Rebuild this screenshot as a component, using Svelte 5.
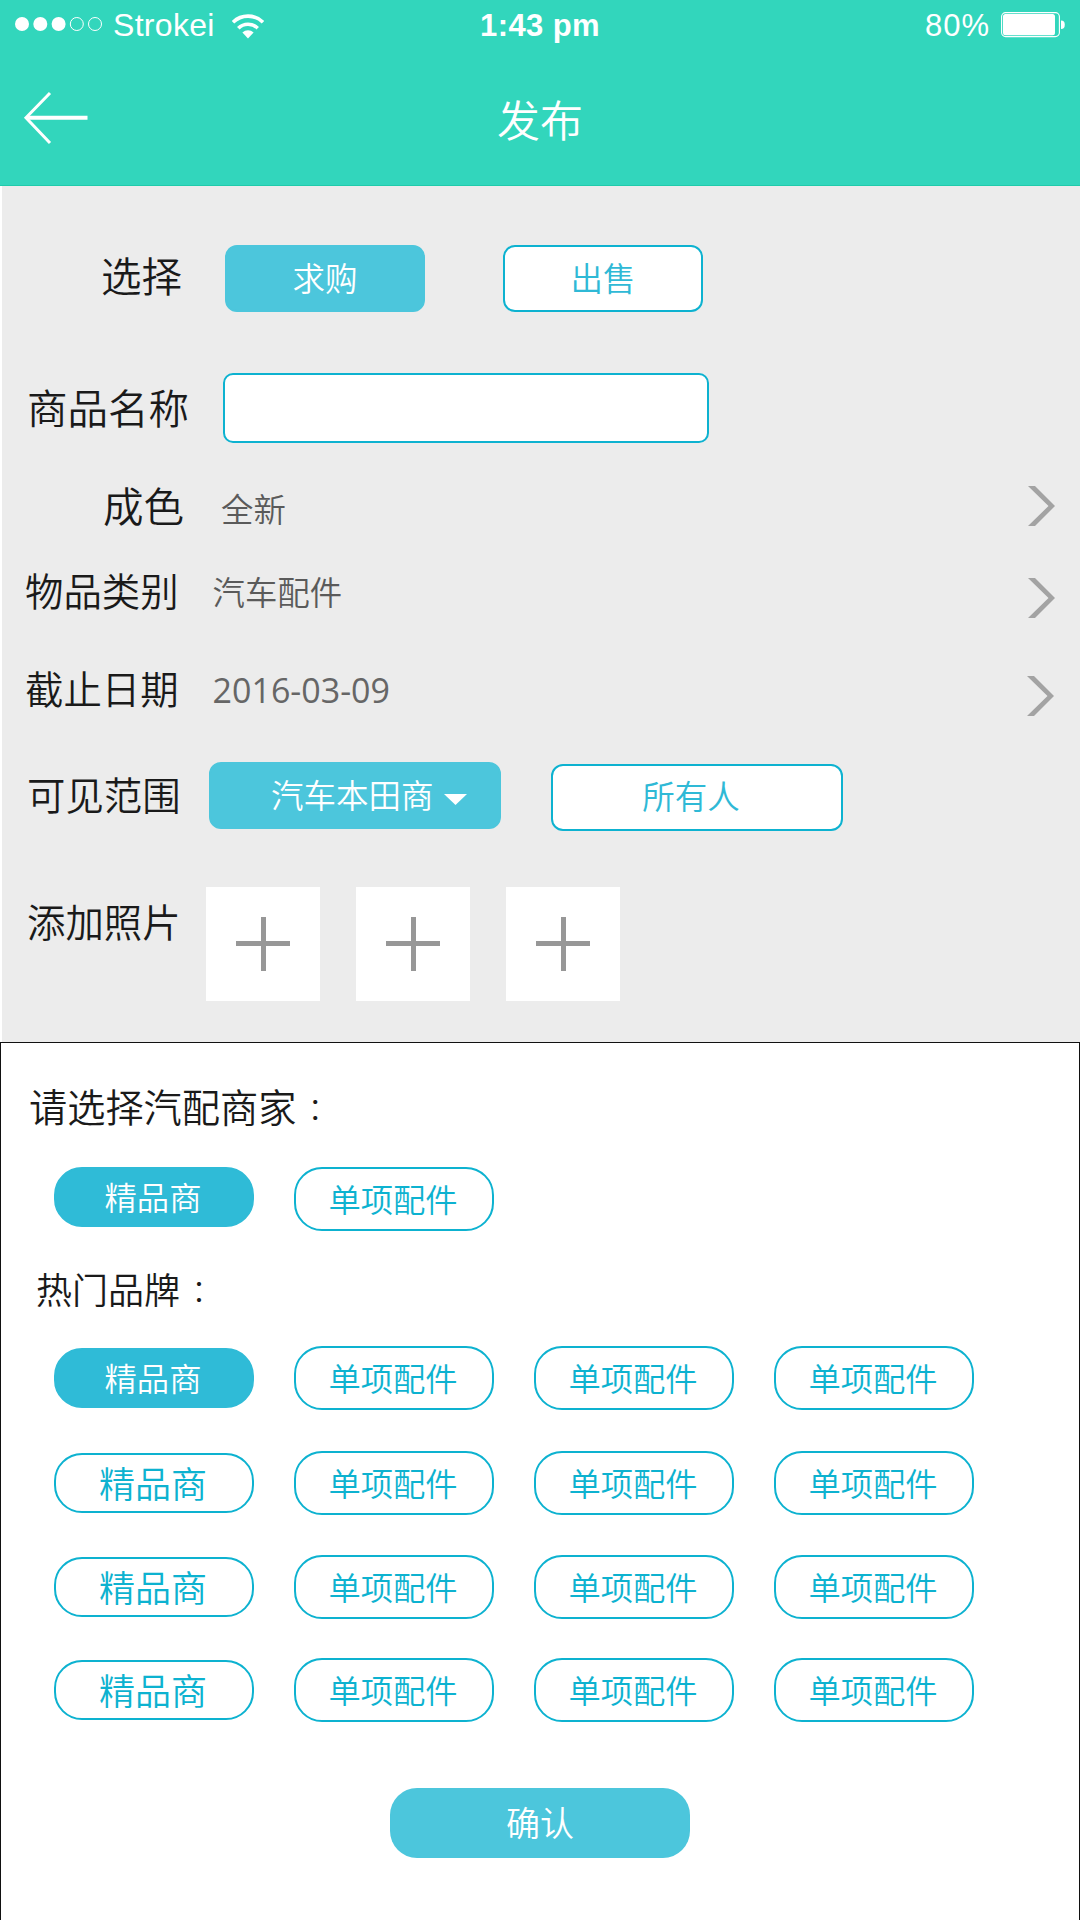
<script>
    let type = $state("求购");
    let scope = $state("汽车本田商");
    let name = $state("");

    let details = [
        {id: "condition", label: "成色", value: "全新"},
        {id: "category", label: "物品类别", value: "汽车配件"},
        {id: "deadline", label: "截止日期", value: "2016-03-09"},
    ];
    let photos = [1, 2, 3];

    let dealers = ["精品商", "单项配件"];
    let brands = [
        ["精品商", "单项配件", "单项配件", "单项配件"],
        ["精品商", "单项配件", "单项配件", "单项配件"],
        ["精品商", "单项配件", "单项配件", "单项配件"],
        ["精品商", "单项配件", "单项配件", "单项配件"],
    ];
    let dealer = $state(0);
    let brand = $state("0-0");
</script>

<div class="page">
    <header>
        <div class="status">
            <div class="carrier">
                <svg class="signal" width="88" height="16" viewBox="0 0 88 16">
                    <circle cx="8" cy="8" r="7" fill="#fff" />
                    <circle cx="26.3" cy="8" r="7" fill="#fff" />
                    <circle cx="44.6" cy="8" r="7" fill="#fff" />
                    <circle cx="62.8" cy="8" r="6.5" fill="none" stroke="#fff" />
                    <circle cx="81" cy="8" r="6.5" fill="none" stroke="#fff" />
                </svg>
                <span>Strokei</span>
                <svg class="wifi" width="32" height="26" viewBox="0 0 32 26">
                    <path d="M1 8.2 A 21.5 21.5 0 0 1 31 8.2" fill="none" stroke="#fff" stroke-width="3.6" />
                    <path d="M6.3 14.2 A 13.8 13.8 0 0 1 25.7 14.2" fill="none" stroke="#fff" stroke-width="3.6" />
                    <path d="M10.4 18.4 A 8.2 8.2 0 0 1 21.6 18.4 L16 24.5 Z" fill="#fff" />
                </svg>
            </div>
            <span class="time">1:43 pm</span>
            <div class="power">
                <span>80%</span>
                <svg width="65" height="26" viewBox="0 0 65 26">
                    <rect x="0.6" y="0.6" width="57.8" height="24" rx="4" fill="none" stroke="#fff" stroke-width="1.1" />
                    <rect x="2" y="2" width="52" height="21.2" rx="2.5" fill="#fff" />
                    <path d="M60 8.5 Q63.8 8.5 63.8 12.7 Q63.8 17 60 17 Z" fill="#fff" />
                </svg>
            </div>
        </div>
        <div class="nav">
            <button class="back" aria-label="返回">
                <svg width="66" height="54" viewBox="0 0 66 54">
                    <path d="M27 2 L3 26.7 L27 52" fill="none" stroke="#fff" stroke-width="3" />
                    <path d="M5 26.7 H64.5" stroke="#fff" stroke-width="4" />
                </svg>
            </button>
            <h1>发布</h1>
        </div>
    </header>

    <section class="form">
        <div class="row type">
            <span class="label">选择</span>
            {#each ["求购", "出售"] as option}
                <button class="option" class:active={type === option} onclick={() => (type = option)}>{option}</button>
            {/each}
        </div>

        <div class="row name">
            <label class="label" for="name">商品名称</label>
            <input id="name" bind:value={name} />
        </div>

        {#each details as item}
            <div class="row detail {item.id}">
                <span class="label">{item.label}</span>
                <span class="value">{item.value}</span>
                <svg class="chevron" width="28" height="40" viewBox="0 0 28 40">
                    <path d="M0 0 H7 L27 20 L7 40 H0 L20.5 20 Z" fill="#a3a3a3" />
                </svg>
            </div>
        {/each}

        <div class="row scope">
            <span class="label">可见范围</span>
            <button class="option dealer" class:active={scope === "汽车本田商"} onclick={() => (scope = "汽车本田商")}>
                汽车本田商
                <svg width="23" height="11" viewBox="0 0 23 11"><path d="M0 0 H23 L11.5 11 Z" fill="currentColor" /></svg>
            </button>
            <button class="option everyone" class:active={scope === "所有人"} onclick={() => (scope = "所有人")}>所有人</button>
        </div>

        <div class="row photos">
            <span class="label">添加照片</span>
            {#each photos as photo}
                <button class="photo" aria-label="添加照片 {photo}">
                    <svg width="54" height="54" viewBox="0 0 54 54">
                        <path d="M0 26.5 H54 M27.5 0 V54" stroke="#979797" stroke-width="5" />
                    </svg>
                </button>
            {/each}
        </div>
    </section>

    <section class="panel">
        <h2>请选择汽配商家<span class="colon">：</span></h2>
        <div class="pills">
            {#each dealers as item, index}
                <button class="pill" class:lead={index === 0} class:active={dealer === index} onclick={() => (dealer = index)}>{item}</button>
            {/each}
        </div>

        <h3>热门品牌<span class="colon">：</span></h3>
        <div class="brands">
            {#each brands as row, r}
                <div class="pills">
                    {#each row as item, c}
                        <button class="pill" class:lead={c === 0} class:active={brand === `${r}-${c}`} onclick={() => (brand = `${r}-${c}`)}>{item}</button>
                    {/each}
                </div>
            {/each}
        </div>

        <button class="confirm">确认</button>
    </section>
</div>

<style>
    :global(body) {
        margin: 0;
        background: #fff;
    }
    .page {
        width: 1080px;
        height: 1920px;
        display: flex;
        flex-direction: column;
        overflow: hidden;
        font-family: "Noto Sans CJK SC", sans-serif;
        font-weight: 350;
        color: #1a1a1a;
    }
    button {
        padding: 0;
        border: 0;
        background: none;
        font: inherit;
        cursor: pointer;
    }
    svg {
        display: block;
    }
    header {
        box-sizing: border-box;
        height: 186px;
        background: #32d6bc;
        border-bottom: 1px solid #1fcbab;
        color: #fff;
    }
    .status {
        height: 51px;
        padding: 0 14px;
        display: grid;
        grid-template-columns: 1fr auto 1fr;
        align-items: center;
        font: 31px/51px "Liberation Sans", Arial, sans-serif;
    }
    .carrier, .power {
        display: flex;
        align-items: center;
    }
    .signal {
        margin: -3px 11px 0 0;
    }
    .carrier span {
        font-size: 32px;
        letter-spacing: 0.3px;
    }
    .wifi {
        margin: 2px 0 0 17px;
    }
    .time {
        font-weight: bold;
        letter-spacing: 0.4px;
    }
    .power {
        justify-content: flex-end;
        letter-spacing: 1px;
    }
    .power svg {
        margin: -1px 0 0 11px;
    }
    .nav {
        display: grid;
        grid-template-columns: 90px 1fr 90px;
        align-items: center;
        height: 134px;
    }
    .back {
        padding-left: 23px;
    }
    h1 {
        margin: 0;
        font-size: 43px;
        font-weight: 350;
        line-height: 43px;
        text-align: center;
    }
    .form {
        box-sizing: border-box;
        height: 856px;
        margin-left: 2px;
        padding: 59px 24px 0;
        background: #ececec;
    }
    .row {
        display: flex;
        align-items: flex-start;
    }
    .label {
        flex: none;
        font-size: 38.4px;
        line-height: 38px;
    }
    .option {
        box-sizing: border-box;
        height: 67px;
        padding-bottom: 4px;
        border: 2px solid #0db2d0;
        border-radius: 12px;
        background: #fff;
        font-size: 32.5px;
        line-height: 32px;
        color: #2fb9d6;
    }
    .option.active {
        border-color: #4cc6dc;
        background: #4cc6dc;
        color: #fff;
    }
    .type .label, .name .label, .condition .label {
        font-size: 40.5px;
        line-height: 40px;
    }
    .type .label {
        margin: 10px 43px 0 75px;
    }
    .type .option {
        width: 200px;
        margin-right: 78px;
    }
    .name {
        margin-top: 61px;
    }
    .name .label {
        margin: 14px 34px 0 1px;
    }
    input {
        box-sizing: border-box;
        width: 486px;
        height: 70px;
        padding: 0 16px;
        border: 2px solid #0db2d0;
        border-radius: 10px;
        background: #fff;
        font: inherit;
        font-size: 32px;
    }
    .detail {
        height: 40px;
    }
    .value {
        flex: 1;
        margin-top: 5px;
        font-size: 32.4px;
        line-height: 32px;
        color: #5a5a5a;
    }
    .chevron {
        margin: 8px 0 0;
    }
    .condition {
        margin-top: 42px;
    }
    .condition .label {
        margin: 0 37px 0 77px;
    }
    .condition .value {
        margin-top: 7px;
    }
    .condition .chevron {
        margin-top: 1px;
    }
    .category {
        margin-top: 45px;
    }
    .category .label, .deadline .label {
        margin: 0 34px 0 -1px;
    }
    .deadline {
        margin-top: 58px;
    }
    .deadline .value {
        margin-top: 6px;
        font-family: "Open Sans", "Noto Sans", sans-serif;
        font-size: 34px;
        font-weight: 400;
        color: #666;
    }
    .deadline .chevron {
        margin-right: 1px;
    }
    .scope {
        margin-top: 54px;
    }
    .scope .label {
        margin: 12px 28.4px 0 1px;
    }
    .scope .option {
        width: 292px;
    }
    .dealer {
        display: flex;
        align-items: center;
        padding-left: 60px;
        gap: 11px;
    }
    .dealer svg {
        margin-top: 12px;
    }
    .everyone {
        margin: 2px 0 0 50px;
        padding-right: 12px;
        padding-bottom: 6px;
    }
    .photos {
        margin-top: 56px;
    }
    .photos .label {
        margin: 14px 25.4px 0 1px;
    }
    .photo {
        width: 114px;
        height: 114px;
        margin-right: 36px;
        padding-left: 30px;
        background: #fff;
    }
    .panel {
        box-sizing: border-box;
        height: 878px;
        padding: 44px 0 0 28px;
        border: 1px solid #111;
        border-bottom: 0;
        background: #fff;
    }
    h2, h3 {
        margin: 0;
        height: 38px;
        font-size: 38.2px;
        font-weight: 350;
        line-height: 38px;
    }
    h3 {
        margin: 39px 0 0 7px;
        height: 36px;
        font-size: 36px;
        line-height: 36px;
    }
    .colon {
        font-family: "Noto Sans CJK TC", sans-serif;
        font-weight: 300;
        font-size: 32px;
        line-height: 0;
        margin-left: 3px;
    }
    .pills {
        display: flex;
        align-items: center;
        gap: 40px;
        height: 64px;
        margin-left: 25px;
    }
    h2 + .pills {
        align-items: flex-start;
        margin-top: 42px;
    }
    .brands {
        display: grid;
        gap: 40px;
        margin-top: 40px;
    }
    .brands .pills:nth-child(2) {
        margin-top: 1px;
    }
    .brands .pills:last-child {
        margin-top: -1px;
    }
    .pill {
        box-sizing: border-box;
        width: 200px;
        height: 64px;
        padding: 0 2px 3px 0;
        border: 2px solid #0db2d0;
        border-radius: 28px;
        font-size: 32.3px;
        line-height: 32px;
        color: #0db2d0;
    }
    .pill.lead {
        height: 60px;
        font-size: 36px;
    }
    .pill.active {
        border-color: #2fbbd7;
        background: #2fbbd7;
        font-size: 32.3px;
        color: #fff;
    }
    .confirm {
        display: block;
        width: 300px;
        height: 70px;
        margin: 66px 0 0 361px;
        padding-bottom: 2px;
        border-radius: 27px;
        background: #4cc6dc;
        font-size: 34px;
        line-height: 34px;
        color: #fff;
    }
</style>
